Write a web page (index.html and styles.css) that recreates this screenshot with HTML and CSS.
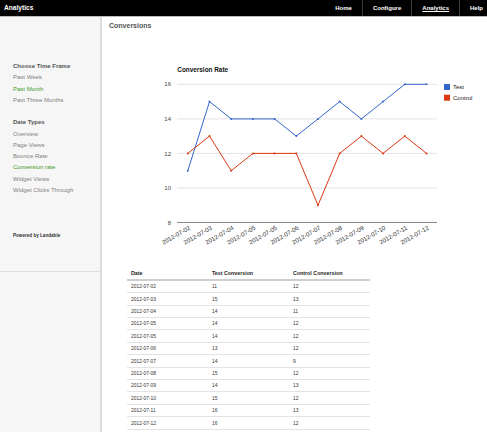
FILE: index.html
```html
<!DOCTYPE html>
<html lang="en">
<head>
    <meta charset="UTF-8">
    <title>Analytics</title>
    <link rel="stylesheet" href="styles.css">
</head>
<body>
    <div class="topbar">
        <div class="brand">Analytics</div>
        <div class="nav">
            <a href="#" class="first">Home</a>
            <a href="#">Configure</a>
            <a href="#" class="current">Analytics</a>
            <a href="#" class="last">Help</a>
        </div>
    </div>

    <div class="layout">
        <div class="sidebar">
            <div class="side-panel">
                <div class="side-group">
                    <h3>Choose Time Frame</h3>
                    <ul>
                        <li><a href="#">Past Week</a></li>
                        <li><a href="#" class="active">Past Month</a></li>
                        <li><a href="#">Past Three Months</a></li>
                    </ul>
                </div>
                <div class="side-group">
                    <h3>Date Types</h3>
                    <ul>
                        <li><a href="#">Overview</a></li>
                        <li><a href="#">Page Views</a></li>
                        <li><a href="#">Bounce Rate</a></li>
                        <li><a href="#" class="active">Conversion rate</a></li>
                        <li><a href="#">Widget Views</a></li>
                        <li><a href="#">Widget Clicks Through</a></li>
                    </ul>
                </div>
                <div class="powered">Powered by Landable</div>
            </div>
        </div>

        <div class="main">
            <h2>Conversions</h2>

            <svg class="chart" width="385" height="228" viewBox="102 31 385 228">
                <text x="177.3" y="72.3" class="chart-title">Conversion Rate</text>

                <g class="grid">
                    <line x1="177" y1="84.3" x2="437" y2="84.3"/>
                    <line x1="177" y1="118.9" x2="437" y2="118.9"/>
                    <line x1="177" y1="153.4" x2="437" y2="153.4"/>
                    <line x1="177" y1="188" x2="437" y2="188"/>
                </g>
                <line class="axis" x1="177" y1="222.5" x2="437" y2="222.5"/>

                <g class="ylabels">
                    <text x="171" y="86.4">16</text>
                    <text x="171" y="121">14</text>
                    <text x="171" y="155.5">12</text>
                    <text x="171" y="190.1">10</text>
                    <text x="171" y="224.6">8</text>
                </g>

                <g class="xlabels">
                    <text transform="translate(190.8 229) rotate(-30)">2012-07-02</text>
                    <text transform="translate(212.5 229) rotate(-30)">2012-07-03</text>
                    <text transform="translate(234.2 229) rotate(-30)">2012-07-04</text>
                    <text transform="translate(255.9 229) rotate(-30)">2012-07-05</text>
                    <text transform="translate(277.6 229) rotate(-30)">2012-07-05</text>
                    <text transform="translate(299.3 229) rotate(-30)">2012-07-06</text>
                    <text transform="translate(321 229) rotate(-30)">2012-07-07</text>
                    <text transform="translate(342.7 229) rotate(-30)">2012-07-08</text>
                    <text transform="translate(364.4 229) rotate(-30)">2012-07-09</text>
                    <text transform="translate(386.1 229) rotate(-30)">2012-07-10</text>
                    <text transform="translate(407.8 229) rotate(-30)">2012-07-11</text>
                    <text transform="translate(429.5 229) rotate(-30)">2012-07-12</text>
                </g>

                <polyline class="line-test" points="187.8,170.7 209.5,101.6 231.2,118.9 252.9,118.9 274.6,118.9 296.3,136.1 318,118.9 339.7,101.6 361.4,118.9 383.1,101.6 404.8,84.3 426.5,84.3"/>
                <polyline class="line-control" points="187.8,153.4 209.5,136.1 231.2,170.7 252.9,153.4 274.6,153.4 296.3,153.4 318,205.2 339.7,153.4 361.4,136.1 383.1,153.4 404.8,136.1 426.5,153.4"/>

                <g class="dots-test">
                    <circle cx="187.8" cy="170.7" r="1"/><circle cx="209.5" cy="101.6" r="1"/>
                    <circle cx="231.2" cy="118.9" r="1"/><circle cx="252.9" cy="118.9" r="1"/>
                    <circle cx="274.6" cy="118.9" r="1"/><circle cx="296.3" cy="136.1" r="1"/>
                    <circle cx="318" cy="118.9" r="1"/><circle cx="339.7" cy="101.6" r="1"/>
                    <circle cx="361.4" cy="118.9" r="1"/><circle cx="383.1" cy="101.6" r="1"/>
                    <circle cx="404.8" cy="84.3" r="1"/><circle cx="426.5" cy="84.3" r="1"/>
                </g>
                <g class="dots-control">
                    <circle cx="187.8" cy="153.4" r="1"/><circle cx="209.5" cy="136.1" r="1"/>
                    <circle cx="231.2" cy="170.7" r="1"/><circle cx="252.9" cy="153.4" r="1"/>
                    <circle cx="274.6" cy="153.4" r="1"/><circle cx="296.3" cy="153.4" r="1"/>
                    <circle cx="318" cy="205.2" r="1"/><circle cx="339.7" cy="153.4" r="1"/>
                    <circle cx="361.4" cy="136.1" r="1"/><circle cx="383.1" cy="153.4" r="1"/>
                    <circle cx="404.8" cy="136.1" r="1"/><circle cx="426.5" cy="153.4" r="1"/>
                </g>

                <g class="legend">
                    <rect x="444" y="84" width="6" height="6" fill="#3366cc"/>
                    <text x="453" y="89.2">Test</text>
                    <rect x="444" y="94.7" width="6" height="6" fill="#dc3912"/>
                    <text x="453" y="99.9">Control</text>
                </g>
            </svg>

            <table class="data">
                <thead>
                    <tr><th>Date</th><th>Test Conversion</th><th>Control Conversion</th></tr>
                </thead>
                <tbody>
                    <tr><td>2012-07-02</td><td>11</td><td>12</td></tr>
                    <tr><td>2012-07-03</td><td>15</td><td>13</td></tr>
                    <tr><td>2012-07-04</td><td>14</td><td>11</td></tr>
                    <tr><td>2012-07-05</td><td>14</td><td>12</td></tr>
                    <tr><td>2012-07-05</td><td>14</td><td>12</td></tr>
                    <tr><td>2012-07-06</td><td>13</td><td>12</td></tr>
                    <tr><td>2012-07-07</td><td>14</td><td>9</td></tr>
                    <tr><td>2012-07-08</td><td>15</td><td>12</td></tr>
                    <tr><td>2012-07-09</td><td>14</td><td>13</td></tr>
                    <tr><td>2012-07-10</td><td>15</td><td>12</td></tr>
                    <tr><td>2012-07-11</td><td>16</td><td>13</td></tr>
                    <tr><td>2012-07-12</td><td>16</td><td>12</td></tr>
                </tbody>
            </table>
        </div>
    </div>
</body>
</html>
```
FILE: styles.css
```css
body { margin: 0; font-family: "Liberation Sans", Arial, sans-serif; background: #fff; overflow: hidden; }
a { text-decoration: none; }

.topbar { display: flex; justify-content: space-between; height: 16px; background: #000; border-bottom: 1px solid #bbb; }
.brand { color: #fff; font-weight: bold; font-size: 6.6px; line-height: 16px; padding-left: 4px; }
.nav { display: flex; }
.nav a { color: #fff; font-weight: bold; font-size: 6px; line-height: 16px; padding: 0 10px; border-left: 1px solid #3a3a3a; }
.nav a.first { border-left: none; }
.nav a.current { text-decoration: underline; }
.nav a.last { padding-right: 4px; }

.layout { display: flex; min-height: calc(100vh - 17px); }
.sidebar { width: 100px; flex-shrink: 0; background: #f6f6f6; border-right: 2px solid #dcdcdc; }
.side-panel { height: 255px; box-sizing: border-box; padding: 44px 0 0 13px; border-bottom: 1px solid #dedede; }
.side-group + .side-group { margin-top: 11.25px; }
.side-group h3 { margin: 0; font-size: 6px; line-height: 11.25px; color: #555; }
.side-group ul { list-style: none; margin: 0; padding: 0; }
.side-group li { font-size: 6px; line-height: 11.25px; }
.side-group a { color: #808080; }
.side-group a.active { color: #3f9a1f; }
.powered { margin-top: 35.7px; font-size: 4.6px; line-height: 8px; font-weight: bold; color: #333; }

.main { flex: 1; }
.main h2 { margin: 0; padding: 4px 6px 0 7px; font-size: 7px; line-height: 10px; color: #555; }

.chart { display: block; font-family: "Liberation Sans", Arial, sans-serif; }
.chart-title { font-size: 6.4px; font-weight: bold; fill: #111; }
.grid line { stroke: #e4e4e4; stroke-width: 1; }
.axis { stroke: #888; stroke-width: 1; }
.ylabels text { font-size: 6px; fill: #444; text-anchor: end; }
.xlabels text { font-size: 6.2px; fill: #333; text-anchor: end; }
.line-test { fill: none; stroke: #3366cc; stroke-width: 1; }
.line-control { fill: none; stroke: #dc3912; stroke-width: 1; }
.dots-test circle { fill: #3366cc; }
.dots-control circle { fill: #dc3912; }
.legend text { font-size: 6px; fill: #222; }

.data { margin: 9.3px 0 0 25px; width: 243px; table-layout: fixed; border-collapse: collapse; }
.data th { text-align: left; font-size: 5.3px; line-height: 5.4px; color: #222; padding: 3px 4px 2px; border-bottom: 2px solid #cfcfcf; }
.data td { font-size: 4.9px; line-height: 5.4px; color: #333; padding: 3.5px 4px 2.5px; border-bottom: 1px solid #e3e3e3; }
```
